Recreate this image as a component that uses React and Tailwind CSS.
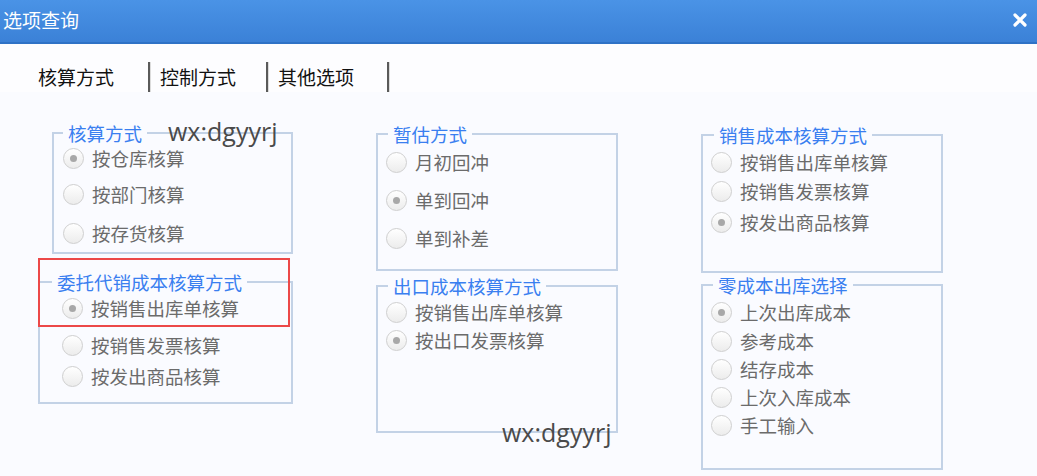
import React from "react";

const FONT = { fontFamily: '"Noto Sans CJK SC", "Noto Sans", sans-serif' };

const Radio = ({ label, checked, className = "" }) => (
  <div className={`flex items-center h-[26px] ${className}`}>
    <span className="w-[21px] h-[21px] rounded-full border border-[#cfcfcf] bg-gradient-to-b from-white to-[#ececec] flex items-center justify-center shrink-0">
      {checked && <span className="w-[7px] h-[7px] rounded-full bg-[#a8a8a8]" />}
    </span>
    <span className="ml-[8px] text-[18.5px] leading-[26px] text-[#6b6b6b] whitespace-nowrap">
      {label}
    </span>
  </div>
);

// padding goes on the inner div so the legend keeps its own offset
const Group = ({ title, className = "", legendClass = "ml-[10px]", padClass = "pl-[8px]", children }) => (
  <fieldset className={`border-2 border-[#c3d2e6] ${className}`}>
    <legend className={`px-[5px] h-[24px] text-[18.5px] leading-[24px] text-[#3a7ff0] ${legendClass}`}>
      {title}
    </legend>
    <div className={padClass}>{children}</div>
  </fieldset>
);

const Tab = ({ label }) => (
  <span className="text-[19px] leading-[30px] text-[#111]">{label}</span>
);

const Sep = ({ className }) => (
  <span className={`h-[30px] w-[3px] border-l-2 border-[#5a5a5a] border-r border-r-[#dcdcdc] ${className}`} />
);

export default function App() {
  return (
    <div className="relative w-[1037px] h-[476px] overflow-hidden bg-[#fafbff]" style={FONT}>
      {/* title bar */}
      <div className="h-[44px] flex items-center justify-between bg-gradient-to-b from-[#4a93e6] to-[#3b81d7] border-b-2 border-[#2f72c6]">
        <span className="ml-[3px] text-[19px] text-white leading-none -mt-[4px]">选项查询</span>
        <svg className="mr-[10px] -mt-[2px]" width="14" height="14" viewBox="0 0 14 14">
          <path d="M2 2 L12 12 M12 2 L2 12" stroke="white" strokeWidth="3.2" strokeLinecap="round" />
        </svg>
      </div>

      {/* tabs */}
      <div className="h-[48px] flex items-end pl-[38px] bg-[#fdfdff]">
        <Tab label="核算方式" />
        <Sep className="ml-[34px]" />
        <span className="ml-[9px]"><Tab label="控制方式" /></span>
        <Sep className="ml-[30px]" />
        <span className="ml-[9px]"><Tab label="其他选项" /></span>
        <Sep className="ml-[33px]" />
      </div>

      {/* groups */}
      <div className="flex pl-[38px]">
        <div className="w-[255px] flex flex-col pt-[29px]">
          <Group title="核算方式" legendClass="ml-[9px]" padClass="pl-[9px]" className="ml-[14px] w-[241px] h-[133px]">
            <Radio label="按仓库核算" checked />
            <Radio label="按部门核算" className="mt-[10px]" />
            <Radio label="按存货核算" className="mt-[13px]" />
          </Group>
          <Group title="委托代销成本核算方式" legendClass="ml-[12px]" padClass="pl-[22px]" className="mt-[16px] w-[255px] h-[134px]">
            <Radio label="按销售出库单核算" checked className="mt-[1px]" />
            <Radio label="按销售发票核算" className="mt-[11px]" />
            <Radio label="按发出商品核算" className="mt-[5px]" />
          </Group>
        </div>

        <div className="w-[242px] ml-[83px] flex flex-col pt-[30px]">
          <Group title="暂估方式" className="h-[149px]">
            <Radio label="月初回冲" className="mt-[3px]" />
            <Radio label="单到回冲" checked className="mt-[12px]" />
            <Radio label="单到补差" className="mt-[12px]" />
          </Group>
          <Group title="出口成本核算方式" className="mt-[3px] h-[159px]">
            <Radio label="按销售出库单核算" className="mt-[1px]" />
            <Radio label="按出口发票核算" checked className="mt-[2px]" />
          </Group>
        </div>

        <div className="w-[242px] ml-[83px] flex flex-col pt-[31px]">
          <Group title="销售成本核算方式" legendClass="ml-[11px]" className="h-[150px]">
            <Radio label="按销售出库单核算" className="mt-[2px]" />
            <Radio label="按销售发票核算" className="mt-[3px]" />
            <Radio label="按发出商品核算" checked className="mt-[5px]" />
          </Group>
          <Group title="零成本出库选择" className="h-[197px]">
            <Radio label="上次出库成本" checked className="mt-[2px]" />
            <Radio label="参考成本" className="mt-[3px]" />
            <Radio label="结存成本" className="mt-[2px]" />
            <Radio label="上次入库成本" className="mt-[2px]" />
            <Radio label="手工输入" className="mt-[2px]" />
          </Group>
        </div>
      </div>

      {/* red highlight */}
      <div className="absolute left-[38px] top-[258px] w-[252px] h-[69px] border-2 border-[#ec4848]" />

      {/* watermarks */}
      <span
        className="absolute left-[168px] top-[115px] text-[25px] leading-[32px] text-[#4a4a4a]"
        style={{ fontFamily: '"Open Sans", sans-serif' }}
      >
        wx:dgyyrj
      </span>
      <span
        className="absolute left-[502px] top-[416px] text-[25px] leading-[32px] text-[#4a4a4a]"
        style={{ fontFamily: '"Open Sans", sans-serif' }}
      >
        wx:dgyyrj
      </span>
    </div>
  );
}
